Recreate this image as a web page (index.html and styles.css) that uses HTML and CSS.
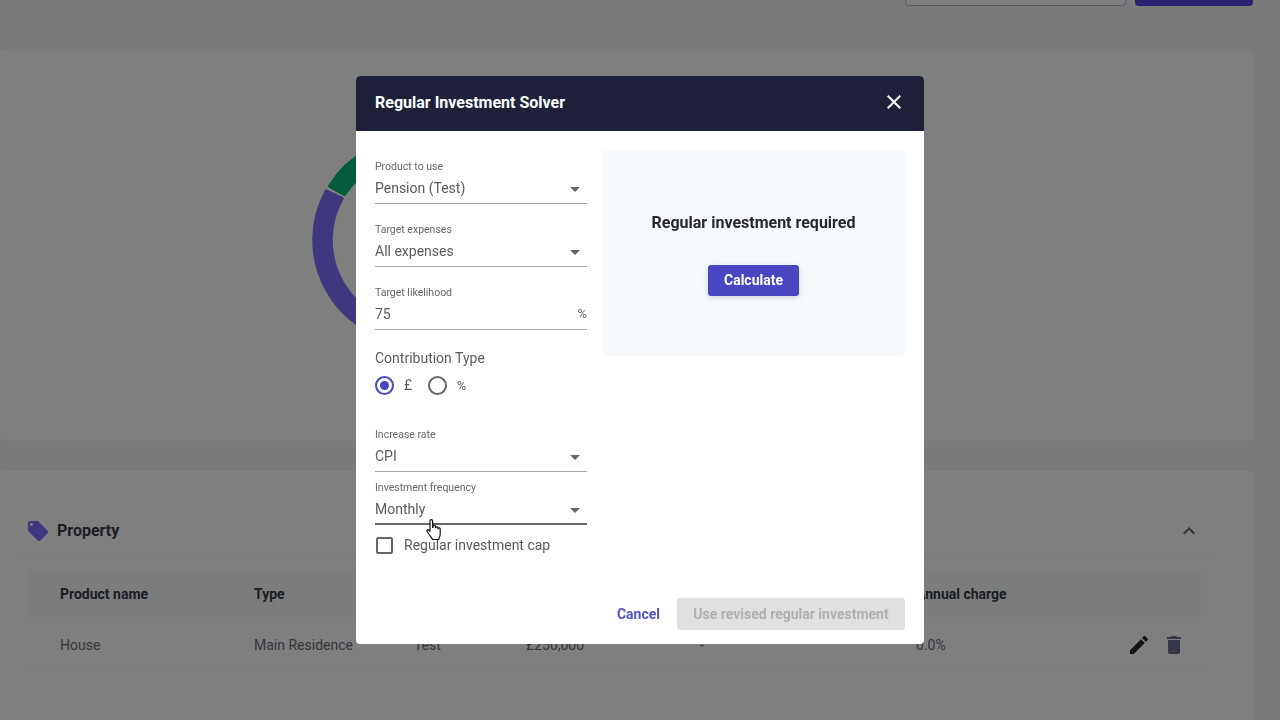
FILE: index.html
```html
<!DOCTYPE html>
<html lang="en">
<head>
    <meta charset="UTF-8">
    <title>Regular Investment Solver</title>
    <link rel="stylesheet" href="styles.css">
</head>
<body>

    <!-- Page behind the dialog -->
    <div class="page">
      <div class="top-bar">
        <div class="btn-outline"></div>
        <div class="btn-solid"></div>
      </div>

      <div class="panel chart-panel">
        <svg class="donut" width="220" height="220" viewBox="-110 -110 220 220">
          <path class="donut-purple" d="M-89.5 -48.5A102 102 0 0 0 0 102L0 86A86 86 0 0 1 -74.5 -41.5Z"/>
          <path class="donut-green" d="M-86 -54A102 102 0 0 1 0 -102L0 -86A86 86 0 0 0 -71.5 -46Z"/>
        </svg>
      </div>

      <div class="panel table-panel">
        <div class="section-head">
          <svg class="tag-icon" width="24" height="24" viewBox="0 0 24 24"><path d="M21.41 11.58l-9-9C12.05 2.22 11.55 2 11 2H4c-1.1 0-2 .9-2 2v7c0 .55.22 1.05.59 1.42l9 9c.36.36.86.58 1.41.58.55 0 1.05-.22 1.41-.59l7-7c.37-.36.59-.86.59-1.41 0-.55-.23-1.06-.59-1.42zM5.5 7C4.67 7 4 6.33 4 5.5S4.67 4 5.5 4 7 4.67 7 5.5 6.33 7 5.5 7z"/></svg>
          <h2>Property</h2>
          <svg class="chevron" width="24" height="24" viewBox="0 0 24 24"><path d="M12 8l-6 6 1.41 1.41L12 10.83l4.59 4.58L18 14z"/></svg>
        </div>
        <div class="table-row table-header">
          <span>Product name</span><span>Type</span><span></span><span></span><span></span><span>Annual charge</span><span></span>
        </div>
        <div class="table-row">
          <span>House</span><span>Main Residence</span><span>Test</span><span>£250,000</span><span>-</span><span>0.0%</span>
          <span class="row-actions">
            <svg class="edit-icon" width="24" height="24" viewBox="0 0 24 24"><path d="M3 17.25V21h3.75L17.81 9.94l-3.75-3.75L3 17.25zM20.71 7.04c.39-.39.39-1.02 0-1.41l-2.34-2.34c-.39-.39-1.02-.39-1.41 0l-1.83 1.83 3.75 3.75 1.83-1.83z"/></svg>
            <svg class="delete-icon" width="24" height="24" viewBox="0 0 24 24"><path d="M6 19c0 1.1.9 2 2 2h8c1.1 0 2-.9 2-2V7H6v12zM19 4h-3.5l-1-1h-5l-1 1H5v2h14V4z"/></svg>
          </span>
        </div>
      </div>
    </div>

    <!-- Dialog -->
    <div class="overlay">
      <div class="modal">
        <div class="modal-head">
          <h1>Regular Investment Solver</h1>
          <svg class="close-icon" width="24" height="24" viewBox="0 0 24 24"><path d="M19 6.41L17.59 5 12 10.59 6.41 5 5 6.41 10.59 12 5 17.59 6.41 19 12 13.41 17.59 19 19 17.59 13.41 12z"/></svg>
        </div>

        <div class="modal-body">
          <div class="fields">
            <div class="field">
              <label>Product to use</label>
              <div class="control">Pension (Test)<i class="caret"></i></div>
            </div>
            <div class="field">
              <label>Target expenses</label>
              <div class="control">All expenses<i class="caret"></i></div>
            </div>
            <div class="field">
              <label>Target likelihood</label>
              <div class="control">75<span class="suffix">%</span></div>
            </div>

            <div class="contribution">
              <div class="contribution-title">Contribution Type</div>
              <div class="radios">
                <span class="radio checked"></span><span class="radio-label">£</span>
                <span class="radio"></span><span class="radio-label small">%</span>
              </div>
            </div>

            <div class="field">
              <label>Increase rate</label>
              <div class="control">CPI<i class="caret"></i></div>
            </div>
            <div class="field field-close">
              <label>Investment frequency</label>
              <div class="control hover">Monthly<i class="caret"></i></div>
            </div>

            <div class="check-row">
              <span class="checkbox"></span>
              <span>Regular investment cap</span>
            </div>
          </div>

          <div class="result">
            <h3>Regular investment required</h3>
            <button class="btn-calc">Calculate</button>
          </div>
        </div>

        <div class="modal-foot">
          <button class="btn-cancel">Cancel</button>
          <button class="btn-use" disabled>Use revised regular investment</button>
        </div>
      </div>

      <!-- Mouse pointer -->
      <svg class="pointer" width="17" height="22" viewBox="0 0 17 22">
        <path d="M4 2a1.3 1.3 0 0 1 2.6 0v6.5h.4V7.2a1.2 1.2 0 0 1 2.4 0v1.5h.3a1.2 1.2 0 0 1 2.3.3v.8a1.1 1.1 0 0 1 2.2.2v5c0 2.5-1 3.5-1.5 5.5H6.5c-.5-1.5-1.5-2.5-3-4.5L1.2 12.5c-.8-1.2.6-2.4 1.6-1.4L4 12.3z"/>
      </svg>
    </div>

</body>
</html>
```

FILE: styles.css
```css
/* Global */
* { box-sizing: border-box; }
body {
    margin: 0;
    height: 720px;
    overflow: hidden;
    font-family: Roboto, "Liberation Sans", sans-serif;
    background-color: #f4f4f4;
}

/* Page behind the dialog */
.page { padding-right: 27px; }
.top-bar { display: flex; justify-content: flex-end; gap: 9px; height: 50px; }
.btn-outline {
    width: 221px;
    height: 36px;
    margin-top: -30px;
    border: 1px solid #bdb8d0;
    border-radius: 4px;
    background: #fff;
}
.btn-solid {
    width: 118px;
    height: 36px;
    margin-top: -30px;
    border-radius: 4px;
    background: #5548e0;
}

.panel { background: #fff; border-radius: 4px; }
.chart-panel { height: 391px; margin-bottom: 29px; padding: 80px 0 0 306px; }
.donut { display: block; }
.donut-purple { fill: #7e70ff; stroke: #7e70ff; stroke-width: 4; stroke-linejoin: round; }
.donut-green { fill: #0cb47c; stroke: #0cb47c; stroke-width: 4; stroke-linejoin: round; }

.table-panel { height: 260px; padding: 0 37px 0 13px; }
.section-head {
    display: flex;
    align-items: center;
    gap: 7px;
    height: 85px;
    padding: 49px 15px 12px 13px;
    border-bottom: 1px solid #f4f4f4;
}
.section-head h2 { margin: 0; flex: 1; font-size: 16px; font-weight: 700; color: #383a48; }
.tag-icon { fill: #7e70ff; flex: none; }
.chevron { fill: #666; flex: none; }

.table-row {
    display: grid;
    grid-template-columns: 194px 160px 112px 174px 216px 1fr 60px;
    align-items: center;
    margin-left: 14px;
    width: 1174px;
    height: 55px;
    padding: 1px 15px 0 33px;
    border-bottom: 1px solid #f4f4f4;
    font-size: 14px;
    color: #6c6e78;
}
.table-header {
    height: 46px;
    margin-top: 16px;
    padding-top: 0;
    border-bottom: none;
    background: #f7fafb;
    font-weight: 700;
    color: #383a48;
}
.row-actions { display: flex; justify-content: flex-end; gap: 11px; }
.edit-icon { fill: #28282e; flex: none; }
.delete-icon { fill: #6c6e8a; flex: none; }

/* Dialog */
.overlay {
    position: fixed;
    inset: 0;
    display: flex;
    align-items: center;
    justify-content: center;
    background: rgba(0,0,0,0.5);
}
.modal {
    display: flex;
    flex-direction: column;
    width: 568px;
    height: 568px;
    background: #fff;
    border-radius: 4px;
    overflow: hidden;
}
.modal-head {
    display: flex;
    align-items: center;
    justify-content: space-between;
    flex: none;
    height: 55px;
    padding: 0 19px 2px;
    background: #1e2139;
}
.modal-head h1 { margin: 0; font-size: 16px; font-weight: 700; color: #fff; }
.close-icon { fill: #fff; margin: 0 -1px 1px 0; }

.modal-body {
    display: flex;
    gap: 15px;
    flex: 1;
    padding: 19px 19px 0;
}

/* Form column */
.fields { width: 212px; padding-top: 11px; }
.field { height: 43px; margin-bottom: 20px; }
.field-close { margin-bottom: 11.5px; margin-top: -9.5px; }
.field label { display: block; height: 12px; font-size: 10.5px; line-height: 12px; color: #666; }
.control {
    position: relative;
    height: 31px;
    padding-top: 6px;
    border-bottom: 1px solid #a8a8a8;
    font-size: 14px;
    line-height: 19px;
    color: #5a5a5a;
}
.control.hover { border-bottom: 2px solid #666; }
.caret {
    position: absolute;
    right: 7px;
    top: 14px;
    border-left: 5px solid transparent;
    border-right: 5px solid transparent;
    border-top: 5px solid #666;
}
.suffix { position: absolute; right: 0; top: 5px; font-size: 13px; color: #666; }

.contribution { height: 79.5px; margin-top: -1px; }
.contribution-title { height: 18px; font-size: 14px; line-height: 18px; color: #5a5a5a; }
.radios { display: flex; align-items: center; height: 20px; margin-top: 8px; }
.radio {
    position: relative;
    width: 19px;
    height: 19px;
    border: 2px solid #666;
    border-radius: 50%;
}
.radio.checked { border-color: #4a45c0; }
.radio.checked::after {
    content: "";
    position: absolute;
    inset: 3px;
    border-radius: 50%;
    background: #4a45c0;
}
.radio-label { width: 34px; padding-left: 10px; font-size: 14px; color: #5a5a5a; }
.radio-label.small { font-size: 12.5px; }

.check-row { display: flex; align-items: center; gap: 11px; padding-left: 1px; font-size: 14px; color: #5a5a5a; }
.checkbox { width: 17px; height: 17px; border: 2px solid #666; border-radius: 2px; }

/* Result box */
.result {
    width: 303px;
    height: 206px;
    padding-top: 63px;
    background: #f6fafc;
    border-radius: 4px;
    text-align: center;
}
.result h3 { margin: 0 0 32px; font-size: 16px; line-height: 20px; font-weight: 700; color: #26272f; }
.btn-calc {
    width: 91px;
    height: 31px;
    padding: 0 0 2px;
    border: none;
    border-radius: 3px;
    background: #4a45c0;
    box-shadow: 0 2px 6px rgba(0,0,0,0.15);
    font: 700 14px Roboto, sans-serif;
    color: #fff;
}

/* Footer */
.modal-foot {
    display: flex;
    align-items: center;
    justify-content: flex-end;
    flex: none;
    gap: 17px;
    height: 60px;
    padding: 0 19px;
}
.btn-cancel { padding: 0; border: none; background: none; font: 700 14px Roboto, sans-serif; color: #5550c4; }
.btn-use {
    width: 228px;
    height: 32px;
    padding: 0;
    border: none;
    border-radius: 3px;
    background: #e0e0e0;
    font: 700 14px Roboto, sans-serif;
    color: #b0b0b0;
}

/* Mouse pointer sits over the form */
.pointer { position: absolute; left: 426px; top: 519px; }
.pointer path { fill: #fff; stroke: #111; stroke-width: 1.2; stroke-linejoin: round; }
```
